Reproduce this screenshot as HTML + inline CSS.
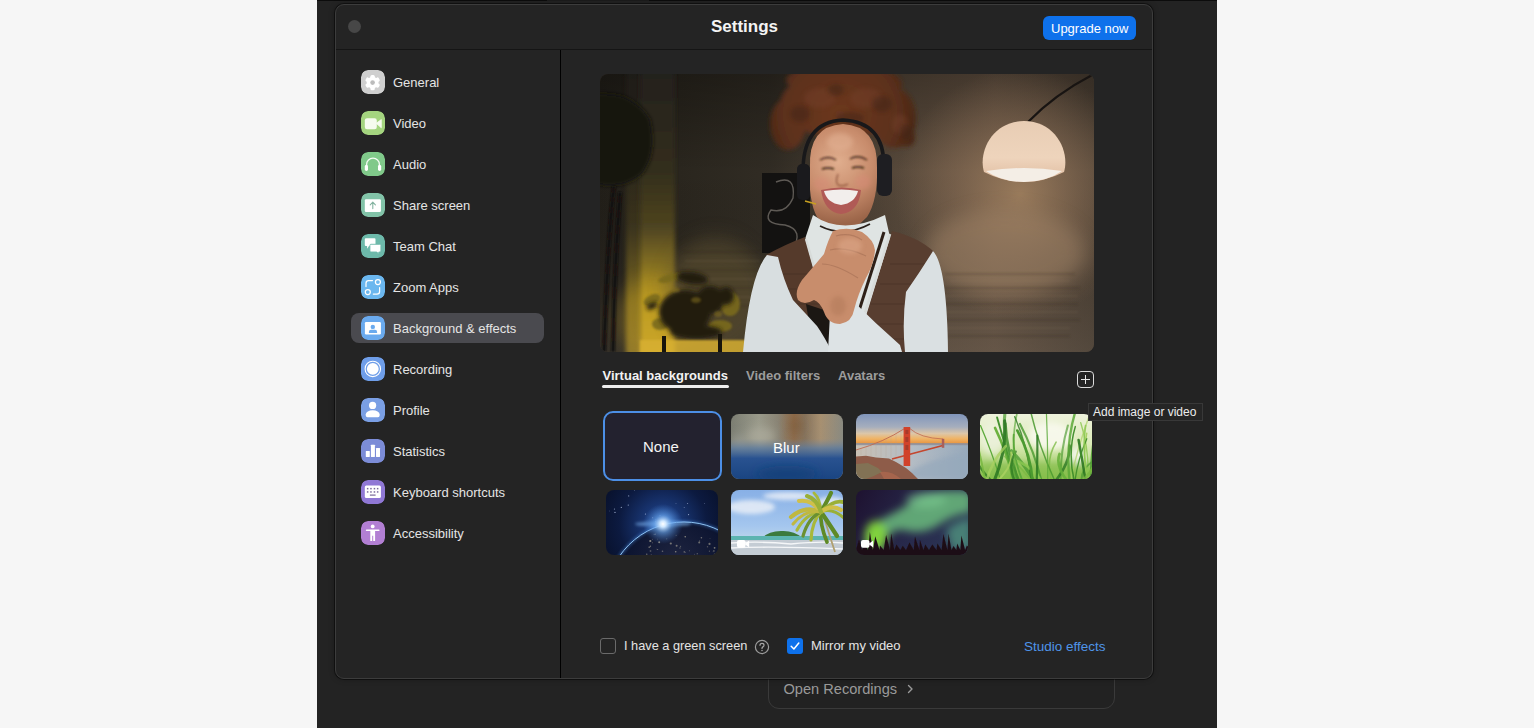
<!DOCTYPE html>
<html><head><meta charset="utf-8">
<style>
*{box-sizing:border-box;margin:0;padding:0}
html,body{width:1534px;height:728px;overflow:hidden;background:#f6f6f6;font-family:"Liberation Sans",sans-serif}
.abs{position:absolute}
.t{position:absolute;white-space:nowrap;line-height:1;font-family:"Liberation Sans",sans-serif}
#app{left:317px;top:0;width:900px;height:728px;background:#232323}
#topstrip{left:317px;top:0;width:900px;height:1px;background:#0c0c0c}
#dlg{left:335px;top:4px;width:818px;height:675px;background:#242424;border:1px solid #3c3c3c;border-radius:9px;box-shadow:0 0 0 1px rgba(0,0,0,.45),0 0 6px rgba(0,0,0,.3)}
.ico{position:absolute;left:361px;width:24px;height:24px;border-radius:7px}
.lbl{position:absolute;left:393px;font-size:13px;color:#e4e4e4}
.tile{position:absolute;width:112px;height:65px;border-radius:8px;overflow:hidden}
</style></head>
<body>
<div id="app" class="abs"></div>
<div id="topstrip" class="abs"></div><div class="abs" style="left:547px;top:0;width:102px;height:1px;background:#1c1c1c"></div>

<!-- Open recordings box behind dialog -->
<div class="abs" style="left:768px;top:640px;width:347px;height:69px;border:1px solid #3a3a3a;border-radius:11px;background:#222"></div>
<div class="t" style="left:783.5px;top:682px;font-size:14.6px;color:#9a9a9a">Open Recordings</div>
<svg class="abs" style="left:905px;top:683px" width="10" height="12" viewBox="0 0 10 12"><path d="M3.5 2.5 L7 6 L3.5 9.5" fill="none" stroke="#9a9a9a" stroke-width="1.4" stroke-linecap="round" stroke-linejoin="round"/></svg>

<div id="dlg" class="abs"></div>
<div class="abs" style="left:336px;top:49px;width:816px;height:1px;background:#151515"></div>
<div class="abs" style="left:560px;top:50px;width:1px;height:628px;background:#000"></div>
<div class="abs" style="left:348px;top:20px;width:13px;height:13px;border-radius:50%;background:#474747"></div>
<div class="t" style="left:711px;top:18.4px;font-size:17px;font-weight:700;color:#f4f4f4">Settings</div>
<div class="abs" style="left:1043px;top:16px;width:93px;height:24px;border-radius:6px;background:#0e71eb"></div>
<div class="t" style="left:1051px;top:21.6px;font-size:13px;color:#ffffff">Upgrade now</div>

<!-- sidebar -->
<div class="abs" style="left:351px;top:313px;width:193px;height:30px;border-radius:8px;background:#4a4a4f"></div>
<div id="icons"></div>
<svg class="ico" style="top:70px" width="24" height="24" viewBox="0 0 24 24"><rect width="24" height="24" rx="7" fill="#cfcfcf"/><g transform="translate(11.6 12.6)" fill="#fff"><circle r="5.9"/><rect x="-2.2" y="-7.6" width="4.4" height="4" rx="1.5" transform="rotate(0)"/><rect x="-2.2" y="-7.6" width="4.4" height="4" rx="1.5" transform="rotate(60)"/><rect x="-2.2" y="-7.6" width="4.4" height="4" rx="1.5" transform="rotate(120)"/><rect x="-2.2" y="-7.6" width="4.4" height="4" rx="1.5" transform="rotate(180)"/><rect x="-2.2" y="-7.6" width="4.4" height="4" rx="1.5" transform="rotate(240)"/><rect x="-2.2" y="-7.6" width="4.4" height="4" rx="1.5" transform="rotate(300)"/><circle r="2.3" fill="#bcbcbc"/></g></svg>
<svg class="ico" style="top:111px" width="24" height="24" viewBox="0 0 24 24"><rect width="24" height="24" rx="7" fill="#a4d47f"/><rect x="3.8" y="7.2" width="12" height="11" rx="2.2" fill="#f6fbef"/><path d="M15.2 12.3 L20.3 8.6 L20.3 16.8 Z" fill="#f6fbef" stroke="#f6fbef" stroke-width="0.8" stroke-linejoin="round"/></svg>
<svg class="ico" style="top:152px" width="24" height="24" viewBox="0 0 24 24"><rect width="24" height="24" rx="7" fill="#80c98a"/><path d="M5.6 15 L5.6 12.5 A6.4 6.4 0 0 1 18.4 12.5 L18.4 15" fill="none" stroke="#f3fbf3" stroke-width="1.3"/><rect x="3.8" y="12.8" width="3.2" height="6.1" rx="1.6" fill="#fff"/><rect x="17" y="12.8" width="3.2" height="6.1" rx="1.6" fill="#fff"/></svg>
<svg class="ico" style="top:193px" width="24" height="24" viewBox="0 0 24 24"><rect width="24" height="24" rx="7" fill="#82c3a8"/><rect x="3.8" y="6.3" width="16.1" height="12.6" rx="1.2" fill="#fff"/><path d="M11.8 15.6 L11.8 9.3 M9.2 11.8 L11.8 9.2 L14.4 11.8" fill="none" stroke="#82b3a0" stroke-width="1.1" stroke-linecap="round" stroke-linejoin="round"/></svg>
<svg class="ico" style="top:234px" width="24" height="24" viewBox="0 0 24 24"><rect width="24" height="24" rx="7" fill="#6db9aa"/><path d="M4.8 4.2 H13.5 A1 1 0 0 1 14.5 5.2 V11.1 A1 1 0 0 1 13.5 12.1 H8 L6.1 14.7 V12.1 H4.8 A1 1 0 0 1 3.8 11.1 V5.2 A1 1 0 0 1 4.8 4.2 Z" fill="#fff"/><path d="M9.9 10.3 H18.9 A1 1 0 0 1 19.9 11.3 V17 A1 1 0 0 1 18.9 18 H17.8 V20.3 L15.8 18 H9.9 A1 1 0 0 1 8.9 17 V11.3 A1 1 0 0 1 9.9 10.3 Z" fill="#fff" stroke="#6db9aa" stroke-width="0.9"/></svg>
<svg class="ico" style="top:275px" width="24" height="24" viewBox="0 0 24 24"><rect width="24" height="24" rx="7" fill="#6bb7ef"/><g fill="none" stroke="#fff" stroke-width="1.25" stroke-linecap="round"><circle cx="16.9" cy="7" r="2.5"/><circle cx="6.8" cy="17" r="2.5"/><path d="M5 11.6 V8.2 A2.6 2.6 0 0 1 7.6 5.6 H11.5"/><path d="M18.6 12.6 V16.4 A2.6 2.6 0 0 1 16 19 H12.3"/></g></svg>
<svg class="ico" style="top:316px" width="24" height="24" viewBox="0 0 24 24"><rect width="24" height="24" rx="7" fill="#6aaaee"/><rect x="3.9" y="6.1" width="16" height="12.4" rx="1.2" fill="#fff"/><circle cx="11.8" cy="10.9" r="2.2" fill="#6aaaee"/><path d="M7.9 17 V16 A2.2 2.2 0 0 1 10.1 13.8 H13.9 A2.2 2.2 0 0 1 16.1 16 V17 Z" fill="#6aaaee"/></svg>
<svg class="ico" style="top:357px" width="24" height="24" viewBox="0 0 24 24"><rect width="24" height="24" rx="7" fill="#6f9ee9"/><circle cx="11.8" cy="11.9" r="7.7" fill="none" stroke="#fff" stroke-width="1.1"/><circle cx="11.8" cy="11.9" r="5.9" fill="#fff"/></svg>
<svg class="ico" style="top:398px" width="24" height="24" viewBox="0 0 24 24"><rect width="24" height="24" rx="7" fill="#7a9fe4"/><circle cx="11.6" cy="7.4" r="3.6" fill="#fff"/><path d="M4.8 16.3 A6.8 4 0 0 1 18.6 16.3 V17.6 A1.6 1.6 0 0 1 17 19.2 H6.4 A1.6 1.6 0 0 1 4.8 17.6 Z" fill="#fff"/></svg>
<svg class="ico" style="top:439px" width="24" height="24" viewBox="0 0 24 24"><rect width="24" height="24" rx="7" fill="#7c8cd7"/><rect x="4.8" y="11.9" width="4" height="6.1" rx="0.4" fill="#fff"/><rect x="9.9" y="5.8" width="4" height="12.2" rx="0.4" fill="#fff"/><rect x="15" y="9.1" width="4" height="8.9" rx="0.4" fill="#fff"/></svg>
<svg class="ico" style="top:480px" width="24" height="24" viewBox="0 0 24 24"><rect width="24" height="24" rx="7" fill="#9078d5"/><rect x="3.8" y="5.6" width="16.1" height="12.4" rx="1.5" fill="#fff"/><g fill="#7a6a9a"><rect x="5.9" y="7.9" width="1.5" height="1.5"/><rect x="9.2" y="7.9" width="1.5" height="1.5"/><rect x="12.7" y="7.9" width="1.5" height="1.5"/><rect x="15.9" y="7.9" width="1.5" height="1.5"/><rect x="5.9" y="11.2" width="1.5" height="1.5"/><rect x="9.2" y="11.2" width="1.5" height="1.5"/><rect x="12.7" y="11.2" width="1.5" height="1.5"/><rect x="15.9" y="11.2" width="1.5" height="1.5"/><rect x="8.9" y="14.5" width="5.7" height="1.2"/></g></svg>
<svg class="ico" style="top:521px" width="24" height="24" viewBox="0 0 24 24"><rect width="24" height="24" rx="7" fill="#b27fd3"/><circle cx="11.7" cy="5.4" r="1.9" fill="#fff"/><path d="M5.6 8.5 H17.8 A0.8 0.8 0 0 1 17.8 10.1 H14.1 V20 H12.2 V14.8 H11.2 V20 H9.3 V10.1 H5.6 A0.8 0.8 0 0 1 5.6 8.5 Z" fill="#fff"/></svg>
<div class="lbl t" style="top:75.5px">General</div>
<div class="lbl t" style="top:116.5px">Video</div>
<div class="lbl t" style="top:157.5px">Audio</div>
<div class="lbl t" style="top:198.5px">Share screen</div>
<div class="lbl t" style="top:239.5px">Team Chat</div>
<div class="lbl t" style="top:280.5px">Zoom Apps</div>
<div class="lbl t" style="top:321.5px">Background &amp; effects</div>
<div class="lbl t" style="top:362.5px">Recording</div>
<div class="lbl t" style="top:403.5px">Profile</div>
<div class="lbl t" style="top:444.5px">Statistics</div>
<div class="lbl t" style="top:485.5px">Keyboard shortcuts</div>
<div class="lbl t" style="top:526.5px">Accessibility</div>

<!-- photo -->
<div class="abs" style="left:600px;top:74px;width:494px;height:278px;border-radius:8px;overflow:hidden;background:#3a3129"><svg width="494" height="278" viewBox="0 0 494 278">
<defs>
<linearGradient id="wallh" x1="0" y1="0" x2="494" y2="0" gradientUnits="userSpaceOnUse">
<stop offset="0" stop-color="#221f19"/><stop offset="0.16" stop-color="#2a261e"/><stop offset="0.35" stop-color="#312c24"/><stop offset="0.6" stop-color="#56483a"/><stop offset="0.8" stop-color="#645242"/><stop offset="1" stop-color="#4c4034"/>
</linearGradient>
<linearGradient id="wallv" x1="0" y1="0" x2="0" y2="278" gradientUnits="userSpaceOnUse">
<stop offset="0" stop-color="#000" stop-opacity="0.3"/><stop offset="0.35" stop-color="#000" stop-opacity="0"/><stop offset="1" stop-color="#6a6258" stop-opacity="0.25"/>
</linearGradient>
<radialGradient id="lampglow" cx="420" cy="120" r="125" gradientUnits="userSpaceOnUse">
<stop offset="0" stop-color="#a0805f" stop-opacity="0.9"/><stop offset="0.55" stop-color="#8f7258" stop-opacity="0.45"/><stop offset="1" stop-color="#8f7258" stop-opacity="0"/>
</radialGradient>
<linearGradient id="yband" x1="0" y1="0" x2="0" y2="278" gradientUnits="userSpaceOnUse">
<stop offset="0" stop-color="#24211a"/><stop offset="0.35" stop-color="#332e1c"/><stop offset="0.55" stop-color="#4e4420"/><stop offset="0.7" stop-color="#8a7420"/><stop offset="0.82" stop-color="#c0a024"/><stop offset="1" stop-color="#d6b030"/>
</linearGradient>
<linearGradient id="lampg" x1="0" y1="47" x2="0" y2="108" gradientUnits="userSpaceOnUse">
<stop offset="0" stop-color="#e8cdb4"/><stop offset="0.6" stop-color="#eed4bc"/><stop offset="1" stop-color="#e0bca0"/>
</linearGradient>
<radialGradient id="face" cx="238" cy="88" r="62" gradientUnits="userSpaceOnUse">
<stop offset="0" stop-color="#e0ae8e"/><stop offset="0.55" stop-color="#c88c6c"/><stop offset="1" stop-color="#9a6448"/>
</radialGradient>
<radialGradient id="hairg" cx="240" cy="40" r="80" gradientUnits="userSpaceOnUse">
<stop offset="0" stop-color="#6c3820"/><stop offset="0.7" stop-color="#5c301b"/><stop offset="1" stop-color="#472616"/>
</radialGradient>
<filter id="b1" filterUnits="userSpaceOnUse" x="-50" y="-50" width="600" height="400"><feGaussianBlur stdDeviation="0.8"/></filter>
<filter id="b2" filterUnits="userSpaceOnUse" x="-50" y="-50" width="600" height="400"><feGaussianBlur stdDeviation="2.2"/></filter>
<filter id="b6" filterUnits="userSpaceOnUse" x="-50" y="-50" width="600" height="400"><feGaussianBlur stdDeviation="9"/></filter>
<filter id="hairtex" filterUnits="userSpaceOnUse" x="-50" y="-50" width="600" height="400"><feTurbulence type="fractalNoise" baseFrequency="0.35" numOctaves="2" seed="3" result="n"/><feColorMatrix in="n" type="matrix" values="0 0 0 0 0.2  0 0 0 0 0.1  0 0 0 0 0.05  0 0 0 -1.6 1.1" result="nm"/><feComposite in="nm" in2="SourceAlpha" operator="in"/></filter>
</defs>
<rect width="494" height="278" fill="url(#wallh)"/>
<rect width="494" height="278" fill="url(#wallv)"/>
<rect width="494" height="278" fill="url(#lampglow)"/>
<ellipse cx="405" cy="178" rx="80" ry="42" fill="#a08468" opacity="0.5" filter="url(#b6)"/>
<ellipse cx="115" cy="225" rx="55" ry="50" fill="#54482e" opacity="0.6" filter="url(#b6)"/>
<!-- yellow lit band left -->
<rect x="26" y="-10" width="16" height="300" fill="url(#yband)" opacity="0.55" filter="url(#b2)"/>
<rect x="40" y="-10" width="35" height="300" fill="url(#yband)" filter="url(#b2)"/>
<ellipse cx="55" cy="245" rx="40" ry="40" fill="#b89422" opacity="0.35" filter="url(#b6)"/>
<ellipse cx="115" cy="220" rx="50" ry="60" fill="#54492f" opacity="0.45" filter="url(#b6)"/>
<!-- brick texture -->
<g stroke="#2a221b" stroke-width="1.2" opacity="0.4" filter="url(#b1)">
<path d="M345 200 H475 M335 214 H480 M330 230 H478 M335 246 H480 M340 262 H470 M82 178 H160 M80 196 H158 M85 214 H160 M80 232 H155"/>
</g>
<g stroke="#a08a6c" stroke-width="1" opacity="0.22" filter="url(#b1)">
<path d="M350 207 H470 M340 222 H478 M335 238 H478 M340 254 H470 M85 187 H160 M80 205 H158 M85 223 H160"/>
</g>
<!-- left dark shade blob -->
<path d="M-5 20 Q32 16 50 45 Q58 80 42 100 Q24 116 -5 110 Z" fill="#161410" filter="url(#b2)"/>
<path d="M14 112 Q8 160 4 278 M20 118 Q14 200 13 278" stroke="#12100d" stroke-width="3.5" fill="none" filter="url(#b1)"/>
<!-- plant -->
<g fill="#7a6a1c" opacity="0.9" filter="url(#b1)">
<ellipse cx="52" cy="226" rx="9" ry="5" transform="rotate(-25 52 226)"/><ellipse cx="70" cy="204" rx="12" ry="4" transform="rotate(-15 70 204)"/><ellipse cx="130" cy="230" rx="10" ry="12"/><ellipse cx="120" cy="252" rx="12" ry="6"/><ellipse cx="60" cy="250" rx="8" ry="6"/>
</g>
<g fill="#211c0f" filter="url(#b2)">
<ellipse cx="85" cy="238" rx="26" ry="22"/>
<ellipse cx="110" cy="226" rx="14" ry="14"/>
<ellipse cx="92" cy="204" rx="16" ry="6" transform="rotate(8 92 204)"/>
<ellipse cx="126" cy="222" rx="8" ry="9"/>
<ellipse cx="52" cy="232" rx="6" ry="3" transform="rotate(-25 52 232)"/>
<ellipse cx="96" cy="258" rx="26" ry="7"/>
</g>
<g fill="#8a7420" opacity="0.5" filter="url(#b1)">
<ellipse cx="96" cy="226" rx="5" ry="3"/><ellipse cx="118" cy="240" rx="4" ry="3"/><ellipse cx="76" cy="216" rx="4" ry="2.5"/>
</g>
<rect x="40" y="266" width="106" height="14" fill="#d8b030" opacity="0.85" filter="url(#b1)"/>
<rect x="62" y="262" width="4" height="16" fill="#17140b"/><rect x="118" y="260" width="4" height="18" fill="#17140b"/>
<!-- poster -->
<rect x="162" y="99" width="48" height="80" fill="#131211"/>
<path d="M176 108 Q196 100 193 124 Q186 140 171 136 Q161 150 185 151 Q205 156 192 176" stroke="#5e5a55" stroke-width="1.4" fill="none"/>
<!-- hair -->
<g fill="url(#hairg)" filter="url(#b2)">
<ellipse cx="242" cy="30" rx="62" ry="34"/>
<ellipse cx="188" cy="50" rx="18" ry="26"/>
<ellipse cx="294" cy="44" rx="22" ry="30"/>
<ellipse cx="228" cy="6" rx="42" ry="14"/>
<ellipse cx="272" cy="10" rx="30" ry="14"/>
<ellipse cx="306" cy="64" rx="9" ry="9"/>
</g>
<g fill="#74402a" opacity="0.45" filter="url(#b2)">
<ellipse cx="220" cy="24" rx="16" ry="10"/><ellipse cx="266" cy="24" rx="16" ry="10"/><ellipse cx="300" cy="50" rx="8" ry="10"/>
</g>
<g fill="#3e2214" opacity="0.45" filter="url(#b2)"><ellipse cx="200" cy="40" rx="10" ry="8"/><ellipse cx="250" cy="44" rx="14" ry="6"/><ellipse cx="282" cy="30" rx="10" ry="8"/><ellipse cx="236" cy="16" rx="8" ry="6"/><ellipse cx="306" cy="58" rx="6" ry="8"/></g>
<!-- headphone band -->
<path d="M203 100 Q202 48 243 46 Q284 48 284 92" stroke="#18181a" stroke-width="3.5" fill="none"/>
<!-- face -->
<path d="M210 94 Q208 52 243 50 Q278 52 277 94 Q278 126 267 143 Q254 157 242 157 Q228 156 217 143 Q208 126 210 94 Z" fill="url(#face)"/>
<ellipse cx="240" cy="68" rx="13" ry="9" fill="#e4b496" opacity="0.5" filter="url(#b2)"/>
<ellipse cx="222" cy="110" rx="8" ry="7" fill="#d88a78" opacity="0.45" filter="url(#b2)"/>
<ellipse cx="263" cy="108" rx="8" ry="7" fill="#d88a78" opacity="0.45" filter="url(#b2)"/>
<path d="M220 86 Q228 81 236 86 M250 85 Q258 80 267 86" stroke="#3e2416" stroke-width="1.4" fill="none" filter="url(#b1)"/>
<path d="M222 95 Q228 93 234 95 M252 94 Q258 92 264 94" stroke="#2e1a10" stroke-width="1.7" fill="none" filter="url(#b1)"/>
<path d="M238 100 Q235 108 238 111 Q243 113 248 110" stroke="#8a5038" stroke-width="1.2" fill="none" filter="url(#b1)"/>
<!-- mouth -->
<path d="M221 116 Q242 111 261 116 Q259 138 241 140 Q224 138 221 116 Z" fill="#b05a56"/>
<path d="M224 117 Q242 114 258 117 Q255 129 241 131 Q227 129 224 117 Z" fill="#f2eeec"/>
<!-- earcups -->
<rect x="197" y="90" width="13" height="36" rx="5" fill="#1a1a1d"/>
<rect x="277" y="80" width="15" height="42" rx="6" fill="#1e1e22"/>
<path d="M205 127 L216 130" stroke="#c8a020" stroke-width="1.5"/>
<!-- turtleneck -->
<path d="M213 141 Q242 162 285 141 L292 172 L268 242 L224 242 L204 168 Z" fill="#dfe4e3"/>
<path d="M220 152 Q244 164 270 150" stroke="#2a201a" stroke-width="1.8" fill="none"/>
<!-- vest left -->
<path d="M166 181 Q186 170 205 163 L226 240 L234 278 L172 278 Q164 222 166 181 Z" fill="#553a2b"/>
<path d="M206 165 L228 242" stroke="#d8dcda" stroke-width="2.4" fill="none"/>
<!-- vest right -->
<path d="M292 157 Q320 164 334 178 Q333 230 325 278 L260 278 Q262 250 266 242 Z" fill="#583e30"/>
<path d="M290 160 L264 242" stroke="#d8dcda" stroke-width="2.6" fill="none"/>
<path d="M284 158 L258 240" stroke="#2e2018" stroke-width="3" fill="none"/>
<g stroke="#3a281e" stroke-width="0.8" opacity="0.5"><path d="M175 200 H215 M172 215 H220 M172 230 H224 M172 245 H226 M290 190 H330 M280 210 H330 M270 230 H328 M264 250 H326 M262 265 H326"/></g>
<!-- dark center -->
<path d="M206 230 L236 240 L232 278 L214 278 Z" fill="#1b1713"/>
<!-- left sleeve -->
<path d="M167 181 Q150 200 143 278 L232 278 Q224 262 217 252 Q206 240 193 226 Q183 205 178 183 Z" fill="#d8dee0"/>
<!-- right sleeve -->
<path d="M333 177 Q347 192 348 278 L305 278 Q302 248 306 218 Q320 198 333 177 Z" fill="#dae0e2"/>
<path d="M228 278 L230 240 Q240 230 252 226 Q276 250 300 271 L302 278 Z" fill="#dde3e5"/>
<!-- hands -->
<path d="M233 157 Q248 152 262 158 Q274 166 275 176 Q274 190 266 204 Q258 220 254 236 Q252 248 240 250 Q228 250 224 238 Q220 228 214 226 Q204 232 198 226 Q194 218 202 206 Q214 192 224 180 Q228 166 233 157 Z" fill="#c88d6c"/>
<path d="M236 162 Q250 158 262 166 M230 176 Q246 172 266 182 M222 190 Q236 190 258 204" stroke="#a06c52" stroke-width="1.1" fill="none" opacity="0.55"/>
<ellipse cx="250" cy="172" rx="12" ry="8" fill="#e0aa8c" opacity="0.5" filter="url(#b2)"/>
<ellipse cx="238" cy="232" rx="8" ry="10" fill="#b07858" opacity="0.5" filter="url(#b2)"/>
<!-- lamp arm -->
<path d="M428 48 Q455 20 494 0" stroke="#181412" stroke-width="2.2" fill="none"/>
<!-- lamp -->
<path d="M384 98 C378 78 392 47 424 47 C456 47 470 78 464 98 Q444 108 424 108 Q404 108 384 98 Z" fill="url(#lampg)"/>
<path d="M386 97 Q424 91 462 97 Q446 108 424 108 Q402 108 386 97 Z" fill="#f4eee6"/>
</svg></div>

<!-- tabs -->
<div class="t" style="left:602.5px;top:369px;font-size:13px;font-weight:700;color:#f2f2f2">Virtual backgrounds</div>
<div class="abs" style="left:602px;top:385px;width:127px;height:2.5px;border-radius:2px;background:#ededed"></div>
<div class="t" style="left:746px;top:369px;font-size:13px;font-weight:700;color:#9c9c9c">Video filters</div>
<div class="t" style="left:838px;top:369px;font-size:13px;font-weight:700;color:#9c9c9c">Avatars</div>
<div class="abs" style="left:1077px;top:371px;width:17px;height:17px;border:1.5px solid #dcdcdc;border-radius:4px"></div>
<div class="abs" style="left:1081px;top:378.8px;width:9px;height:1.4px;background:#e8e8e8"></div>
<div class="abs" style="left:1084.8px;top:375px;width:1.4px;height:9px;background:#e8e8e8"></div>

<!-- tiles -->
<div class="abs" style="left:603px;top:411px;width:119px;height:70px;border:2px solid #4c8fe6;border-radius:10px;background:#23222f"></div>
<div class="t" style="left:643px;top:439.3px;font-size:15px;color:#f4f4f4">None</div>
<div class="tile" style="left:731px;top:414px"><svg width="112" height="65" viewBox="0 0 112 65"><defs>
<linearGradient id="bl1" x1="0" y1="0" x2="112" y2="0" gradientUnits="userSpaceOnUse"><stop offset="0" stop-color="#7c7e72"/><stop offset="0.25" stop-color="#9a9a8a"/><stop offset="0.42" stop-color="#8a8474"/><stop offset="0.56" stop-color="#8e6a48"/><stop offset="0.66" stop-color="#86735c"/><stop offset="0.8" stop-color="#a89070"/><stop offset="1" stop-color="#8a8a80"/></linearGradient>
<linearGradient id="bl2" x1="0" y1="0" x2="0" y2="65" gradientUnits="userSpaceOnUse"><stop offset="0" stop-color="#7a8898" stop-opacity="0"/><stop offset="0.38" stop-color="#7a8898" stop-opacity="0.05"/><stop offset="0.52" stop-color="#5a7aa0" stop-opacity="0.75"/><stop offset="0.68" stop-color="#295290" stop-opacity="1"/><stop offset="1" stop-color="#1a4582" stop-opacity="1"/></linearGradient>
<filter id="blb" filterUnits="userSpaceOnUse" x="-20" y="-20" width="160" height="110"><feGaussianBlur stdDeviation="4"/></filter>
</defs><rect width="112" height="65" fill="url(#bl1)"/>
<g filter="url(#blb)"><ellipse cx="30" cy="22" rx="14" ry="9" fill="#b0ae9e" opacity="0.7"/><ellipse cx="65" cy="12" rx="8" ry="9" fill="#7a5a3a" opacity="0.5"/><ellipse cx="8" cy="30" rx="8" ry="10" fill="#a0a298" opacity="0.6"/></g>
<rect width="112" height="65" fill="url(#bl2)"/>
<g filter="url(#blb)"><ellipse cx="56" cy="60" rx="30" ry="8" fill="#163e76" opacity="0.7"/></g>
</svg></div><div class="t" style="left:773px;top:439.5px;font-size:15px;color:#ffffff">Blur</div>
<div class="tile" style="left:856px;top:414px"><svg width="112" height="65" viewBox="0 0 112 65"><defs>
<linearGradient id="gg1" x1="0" y1="0" x2="0" y2="65" gradientUnits="userSpaceOnUse"><stop offset="0" stop-color="#8095bb"/><stop offset="0.2" stop-color="#a6aebd"/><stop offset="0.3" stop-color="#dcc6a8"/><stop offset="0.38" stop-color="#efb466"/><stop offset="0.44" stop-color="#e99b48"/><stop offset="0.47" stop-color="#a8a0a4"/><stop offset="0.6" stop-color="#b8bec4"/><stop offset="1" stop-color="#a4b4c4"/></linearGradient>
<linearGradient id="gg2" x1="0" y1="0" x2="112" y2="0" gradientUnits="userSpaceOnUse"><stop offset="0" stop-color="#c8c0b4"/><stop offset="0.5" stop-color="#b4bcc4"/><stop offset="1" stop-color="#98aabc"/></linearGradient>
<filter id="ggb" filterUnits="userSpaceOnUse" x="-10" y="-10" width="140" height="90"><feGaussianBlur stdDeviation="0.5"/></filter>
<filter id="ggb2" filterUnits="userSpaceOnUse" x="-10" y="-10" width="140" height="90"><feGaussianBlur stdDeviation="2"/></filter>
</defs><rect width="112" height="65" fill="url(#gg1)"/>
<rect x="0" y="30.5" width="112" height="35" fill="url(#gg2)"/>
<path d="M40 65 Q70 45 112 38 L112 65 Z" fill="#95a8bb" opacity="0.7" filter="url(#ggb2)"/>
<rect x="0" y="29" width="112" height="2.2" fill="#8a8c98" opacity="0.7" filter="url(#ggb)"/>
<g filter="url(#ggb)">
<path d="M0 36 Q28 28 48.6 14.5" stroke="#c06a50" stroke-width="0.9" fill="none"/>
<path d="M53.8 14.5 Q64 24 87 25" stroke="#c06a50" stroke-width="0.8" fill="none"/>
<g stroke="#b89a90" stroke-width="0.35" opacity="0.7"><path d="M5 35 V41 M10 33 V41 M15 31 V42 M20 29 V42 M25 27 V43 M30 25 V43 M35 22 V44 M40 20 V44 M45 17 V44"/></g>
<path d="M36 45 L86.8 31.5" stroke="#c4462e" stroke-width="1.8" fill="none"/>
<rect x="47.6" y="13" width="6.6" height="39" fill="#d1432b"/>
<rect x="49.4" y="16" width="3" height="4" fill="#a83a2a"/><rect x="49.4" y="23" width="3" height="5" fill="#a83a2a"/><rect x="49.4" y="31" width="3" height="5" fill="#a83a2a"/>
<rect x="85.8" y="24.8" width="2.5" height="9" fill="#a8605a"/>
<path d="M0 42.4 L10 41.8 L20 43.4 L33 44.4 L40 48 L50 54 L56 59 L62 65 L0 65 Z" fill="#8e5c48"/>
<path d="M0 50 L12 49 L22 54 L26 58 L18 62 L10 65 L0 65 Z" fill="#7e7a58" opacity="0.75"/>
<path d="M24 58 Q35 56 45 65 L28 65 Z" fill="#b06a50" opacity="0.7"/>
</g></svg></div>
<div class="tile" style="left:980px;top:414px"><svg width="112" height="65" viewBox="0 0 112 65"><defs>
<linearGradient id="gr0" x1="0" y1="0" x2="0" y2="65" gradientUnits="userSpaceOnUse"><stop offset="0" stop-color="#eef2dc"/><stop offset="0.45" stop-color="#dcebb8"/><stop offset="1" stop-color="#92c454"/></linearGradient>
<filter id="grb" filterUnits="userSpaceOnUse" x="-10" y="-10" width="140" height="90"><feGaussianBlur stdDeviation="0.55"/></filter>
<filter id="grb2" filterUnits="userSpaceOnUse" x="-10" y="-10" width="140" height="90"><feGaussianBlur stdDeviation="3"/></filter>
</defs><rect width="112" height="65" fill="url(#gr0)"/>
<g filter="url(#grb2)"><ellipse cx="70" cy="22" rx="22" ry="14" fill="#f8f8ee" opacity="0.9"/><ellipse cx="98" cy="42" rx="9" ry="10" fill="#f4f6f0" opacity="0.9"/><ellipse cx="12" cy="25" rx="12" ry="16" fill="#f0f2e4" opacity="0.7"/><rect x="0" y="48" width="112" height="20" fill="#7ab840" opacity="0.55"/></g>
<g filter="url(#grb)" fill="none" stroke-linecap="round"><path d="M34.5 68 Q26.5 34.2 17.1 3.5" stroke="#3e8e2a" stroke-width="1.9" opacity="0.97"/><path d="M21.2 68 Q11.9 38.3 0.5 11.6" stroke="#5aa838" stroke-width="1.3" opacity="0.98"/><path d="M71.9 68 Q65.0 46.6 76.1 28.1" stroke="#78b840" stroke-width="1.6" opacity="0.75"/><path d="M12.6 68 Q-3.3 52.1 -6.5 39.2" stroke="#2f7a24" stroke-width="2.4" opacity="0.78"/><path d="M61.8 68 Q54.5 37.4 40.0 9.9" stroke="#4a9a30" stroke-width="2.1" opacity="0.81"/><path d="M107.7 68 Q109.8 36.8 100.7 8.6" stroke="#8cc850" stroke-width="1.4" opacity="0.83"/><path d="M101.8 68 Q99.9 56.0 113.2 47.0" stroke="#4a9a30" stroke-width="2.0" opacity="0.70"/><path d="M54.7 68 Q44.6 50.8 31.6 36.7" stroke="#4a9a30" stroke-width="3.0" opacity="0.77"/><path d="M37.7 68 Q29.5 30.7 37.6 -3.6" stroke="#5aa838" stroke-width="1.7" opacity="0.67"/><path d="M80.6 68 Q80.0 38.2 87.9 11.4" stroke="#4a9a30" stroke-width="2.0" opacity="0.66"/><path d="M51.3 68 Q48.4 33.9 34.7 2.8" stroke="#2f7a24" stroke-width="1.5" opacity="0.79"/><path d="M106.9 68 Q102.3 42.1 106.7 19.3" stroke="#a8d060" stroke-width="1.5" opacity="0.95"/><path d="M29.0 68 Q36.0 53.7 24.7 42.4" stroke="#78b840" stroke-width="1.5" opacity="0.70"/><path d="M75.3 68 Q58.8 31.8 50.9 -1.4" stroke="#4a9a30" stroke-width="1.5" opacity="0.86"/><path d="M33.9 68 Q27.6 39.5 15.1 14.0" stroke="#67b03a" stroke-width="2.7" opacity="0.96"/><path d="M90.2 68 Q97.5 33.9 108.9 2.8" stroke="#a8d060" stroke-width="1.4" opacity="0.67"/><path d="M3.2 68 Q-13.0 40.7 -11.3 16.3" stroke="#78b840" stroke-width="1.2" opacity="0.84"/><path d="M110.8 68 Q111.1 37.5 116.5 10.0" stroke="#4a9a30" stroke-width="2.5" opacity="0.86"/><path d="M52.8 68 Q42.8 56.0 33.6 46.9" stroke="#78b840" stroke-width="1.8" opacity="0.69"/><path d="M36.8 68 Q21.4 31.6 25.0 -1.8" stroke="#4a9a30" stroke-width="3.1" opacity="0.70"/><path d="M61.3 68 Q56.7 56.0 37.6 47.0" stroke="#8cc850" stroke-width="2.6" opacity="0.83"/><path d="M105.8 68 Q102.3 45.5 98.6 26.0" stroke="#2f7a24" stroke-width="2.5" opacity="0.93"/><path d="M94.8 68 Q97.9 44.9 106.8 24.8" stroke="#3e8e2a" stroke-width="1.3" opacity="0.93"/><path d="M52.6 68 Q51.1 40.8 37.3 16.5" stroke="#4a9a30" stroke-width="2.6" opacity="0.98"/><path d="M39.5 68 Q26.6 37.2 25.5 9.4" stroke="#3e8e2a" stroke-width="2.4" opacity="0.82"/><path d="M74.7 68 Q90.3 48.4 89.6 31.7" stroke="#2f7a24" stroke-width="2.8" opacity="0.82"/><path d="M16.8 68 Q33.4 51.7 31.2 38.4" stroke="#a8d060" stroke-width="2.0" opacity="0.91"/><path d="M5.4 68 Q-1.4 30.3 -11.7 -4.4" stroke="#78b840" stroke-width="2.1" opacity="0.86"/><path d="M67.7 68 Q68.0 31.6 66.4 -1.9" stroke="#5aa838" stroke-width="1.2" opacity="0.83"/><path d="M108.9 68 Q101.5 38.3 105.6 11.5" stroke="#8cc850" stroke-width="1.7" opacity="0.83"/><path d="M88.2 68 Q75.0 52.5 79.5 40.0" stroke="#67b03a" stroke-width="2.7" opacity="0.88"/><path d="M94.4 68 Q87.5 38.8 95.3 12.6" stroke="#3e8e2a" stroke-width="1.5" opacity="0.96"/><path d="M89.7 68 Q85.3 31.5 95.2 -2.0" stroke="#5aa838" stroke-width="2.4" opacity="0.84"/><path d="M34.8 68 Q27.4 51.3 35.7 37.6" stroke="#2f7a24" stroke-width="2.3" opacity="0.72"/><path d="M0.1 68 Q-2.0 33.2 -20.0 1.3" stroke="#4a9a30" stroke-width="1.3" opacity="0.86"/><path d="M56.7 68 Q57.6 43.4 57.3 21.7" stroke="#2f7a24" stroke-width="2.2" opacity="0.89"/><path d="M101.9 68 Q121.9 45.9 124.0 26.9" stroke="#78b840" stroke-width="2.9" opacity="0.80"/><path d="M42.9 68 Q32.5 42.8 33.7 20.6" stroke="#5aa838" stroke-width="1.8" opacity="0.96"/><path d="M13.8 68 Q26.9 35.9 24.6 6.9" stroke="#2f7a24" stroke-width="3.1" opacity="0.91"/><path d="M6.5 68 Q10.6 48.5 25.7 32.1" stroke="#a8d060" stroke-width="2.6" opacity="0.77"/></g></svg></div>
<div class="tile" style="left:606px;top:490px"><svg width="112" height="65" viewBox="0 0 112 65"><defs>
<radialGradient id="ea1" cx="57" cy="34" r="80" gradientUnits="userSpaceOnUse"><stop offset="0" stop-color="#3060b0"/><stop offset="0.25" stop-color="#183470"/><stop offset="0.55" stop-color="#0c1a40"/><stop offset="1" stop-color="#060b1e"/></radialGradient>
<radialGradient id="ea2" cx="57" cy="34" r="20" gradientUnits="userSpaceOnUse"><stop offset="0" stop-color="#ffffff"/><stop offset="0.15" stop-color="#d0e8ff"/><stop offset="0.45" stop-color="#6aa8f0" stop-opacity="0.6"/><stop offset="1" stop-color="#3a70c0" stop-opacity="0"/></radialGradient>
<radialGradient id="ea3" cx="70" cy="70" r="50" gradientUnits="userSpaceOnUse"><stop offset="0" stop-color="#1e2440"/><stop offset="1" stop-color="#0c1430"/></radialGradient>
<filter id="eab" filterUnits="userSpaceOnUse" x="-10" y="-10" width="140" height="90"><feGaussianBlur stdDeviation="0.6"/></filter>
<filter id="eab2" filterUnits="userSpaceOnUse" x="-10" y="-10" width="140" height="90"><feGaussianBlur stdDeviation="1.5"/></filter>
</defs><rect width="112" height="65" fill="url(#ea1)"/><circle cx="54.0" cy="25.6" r="0.36" fill="#c0d0f0" opacity="0.90"/><circle cx="8.4" cy="19.1" r="0.51" fill="#c0d0f0" opacity="0.84"/><circle cx="82.6" cy="24.6" r="0.53" fill="#c0d0f0" opacity="0.85"/><circle cx="39.4" cy="24.0" r="0.57" fill="#c0d0f0" opacity="0.82"/><circle cx="46.7" cy="27.7" r="0.55" fill="#c0d0f0" opacity="0.64"/><circle cx="70.0" cy="13.4" r="0.45" fill="#c0d0f0" opacity="0.67"/><circle cx="9.0" cy="22.4" r="0.60" fill="#c0d0f0" opacity="0.83"/><circle cx="81.6" cy="13.6" r="0.51" fill="#c0d0f0" opacity="0.65"/><circle cx="49.3" cy="29.3" r="0.28" fill="#c0d0f0" opacity="0.75"/><circle cx="3.3" cy="21.0" r="0.42" fill="#c0d0f0" opacity="0.44"/><circle cx="78.2" cy="17.4" r="0.47" fill="#c0d0f0" opacity="0.85"/><circle cx="28.7" cy="0.4" r="0.36" fill="#c0d0f0" opacity="0.71"/><circle cx="22.7" cy="5.9" r="0.57" fill="#c0d0f0" opacity="0.70"/><circle cx="49.5" cy="31.2" r="0.36" fill="#c0d0f0" opacity="0.70"/><circle cx="22.2" cy="15.1" r="0.53" fill="#c0d0f0" opacity="0.85"/><circle cx="98.6" cy="13.5" r="0.45" fill="#c0d0f0" opacity="0.49"/><circle cx="15.3" cy="17.4" r="0.54" fill="#c0d0f0" opacity="0.81"/><circle cx="79.7" cy="33.3" r="0.35" fill="#c0d0f0" opacity="0.40"/>
<circle cx="78" cy="110" r="78" fill="url(#ea3)"/>
<circle cx="78" cy="110" r="78" fill="none" stroke="#4a90e8" stroke-width="2.4" opacity="0.5" filter="url(#eab2)"/>
<circle cx="78" cy="110" r="78" fill="none" stroke="#9ad0ff" stroke-width="0.9" filter="url(#eab)"/>
<g filter="url(#eab)"><circle cx="70.6" cy="55.8" r="1.0" fill="#c8c0a8" opacity="0.53"/><circle cx="74.6" cy="56.3" r="0.5" fill="#c8c0a8" opacity="0.56"/><circle cx="83.4" cy="60.7" r="0.5" fill="#c8c0a8" opacity="0.45"/><circle cx="44.5" cy="61.0" r="0.9" fill="#c8c0a8" opacity="0.32"/><circle cx="108.7" cy="64.3" r="0.9" fill="#c8c0a8" opacity="0.61"/><circle cx="49.3" cy="44.3" r="0.8" fill="#c8c0a8" opacity="0.33"/><circle cx="51.7" cy="49.1" r="0.4" fill="#c8c0a8" opacity="0.53"/><circle cx="69.7" cy="61.7" r="0.8" fill="#c8c0a8" opacity="0.62"/><circle cx="74.0" cy="57.9" r="0.7" fill="#c8c0a8" opacity="0.44"/><circle cx="109.8" cy="64.9" r="1.0" fill="#c8c0a8" opacity="0.65"/><circle cx="60.7" cy="48.8" r="0.6" fill="#c8c0a8" opacity="0.34"/><circle cx="93.2" cy="52.4" r="1.0" fill="#c8c0a8" opacity="0.49"/><circle cx="107.0" cy="61.8" r="0.4" fill="#c8c0a8" opacity="0.40"/><circle cx="103.5" cy="53.9" r="1.1" fill="#c8c0a8" opacity="0.50"/><circle cx="43.3" cy="57.2" r="0.9" fill="#c8c0a8" opacity="0.43"/><circle cx="44.3" cy="51.0" r="1.1" fill="#c8c0a8" opacity="0.68"/><circle cx="46.5" cy="49.2" r="0.5" fill="#c8c0a8" opacity="0.33"/><circle cx="95.4" cy="47.7" r="0.8" fill="#c8c0a8" opacity="0.52"/><circle cx="51.7" cy="59.4" r="0.5" fill="#c8c0a8" opacity="0.62"/><circle cx="46.4" cy="52.8" r="0.5" fill="#c8c0a8" opacity="0.43"/><circle cx="107.9" cy="60.9" r="0.6" fill="#c8c0a8" opacity="0.74"/><circle cx="53.2" cy="52.3" r="1.0" fill="#c8c0a8" opacity="0.62"/><circle cx="45.2" cy="64.8" r="0.5" fill="#c8c0a8" opacity="0.43"/><circle cx="93.6" cy="50.9" r="0.6" fill="#c8c0a8" opacity="0.34"/><circle cx="44.5" cy="56.2" r="0.6" fill="#c8c0a8" opacity="0.60"/><circle cx="64.8" cy="53.5" r="1.1" fill="#c8c0a8" opacity="0.54"/><circle cx="79.4" cy="62.2" r="0.5" fill="#c8c0a8" opacity="0.38"/><circle cx="103.4" cy="61.2" r="0.6" fill="#c8c0a8" opacity="0.39"/><circle cx="91.2" cy="63.7" r="0.5" fill="#c8c0a8" opacity="0.78"/><circle cx="101.5" cy="56.7" r="0.7" fill="#c8c0a8" opacity="0.35"/><circle cx="40.8" cy="64.2" r="0.6" fill="#c8c0a8" opacity="0.65"/><circle cx="56.5" cy="61.3" r="0.8" fill="#c8c0a8" opacity="0.45"/><circle cx="50.6" cy="59.1" r="0.4" fill="#c8c0a8" opacity="0.41"/><circle cx="78.3" cy="61.9" r="0.8" fill="#c8c0a8" opacity="0.44"/><circle cx="104.0" cy="48.3" r="0.4" fill="#c8c0a8" opacity="0.43"/><circle cx="70.1" cy="45.3" r="0.5" fill="#c8c0a8" opacity="0.48"/><circle cx="79.2" cy="46.8" r="0.7" fill="#c8c0a8" opacity="0.75"/><circle cx="108.6" cy="57.8" r="0.9" fill="#c8c0a8" opacity="0.59"/><circle cx="48.1" cy="44.7" r="0.4" fill="#c8c0a8" opacity="0.76"/><circle cx="88.5" cy="64.2" r="0.4" fill="#c8c0a8" opacity="0.62"/></g>
<ellipse cx="57" cy="34" rx="28" ry="3" fill="#8ac4ff" opacity="0.5" filter="url(#eab2)"/>
<rect width="112" height="65" fill="url(#ea2)"/>
</svg></div>
<div class="tile" style="left:731px;top:490px"><svg width="112" height="65" viewBox="0 0 112 65"><defs>
<linearGradient id="be1" x1="0" y1="0" x2="0" y2="65" gradientUnits="userSpaceOnUse"><stop offset="0" stop-color="#88b0e6"/><stop offset="0.55" stop-color="#a4c6ee"/><stop offset="0.72" stop-color="#b6d2ec"/></linearGradient>
<filter id="beb" filterUnits="userSpaceOnUse" x="-10" y="-10" width="140" height="90"><feGaussianBlur stdDeviation="2"/></filter>
<filter id="beb2" filterUnits="userSpaceOnUse" x="-10" y="-10" width="140" height="90"><feGaussianBlur stdDeviation="0.5"/></filter>
</defs><rect width="112" height="65" fill="url(#be1)"/>
<g filter="url(#beb)" fill="#eef2f8" opacity="0.8"><ellipse cx="20" cy="17" rx="24" ry="7"/><ellipse cx="58" cy="6" rx="26" ry="4"/><ellipse cx="100" cy="12" rx="14" ry="5"/></g>
<path d="M31 48 Q38 41 50 41 Q62 40 72 48 Z" fill="#3a7a3e" filter="url(#beb2)"/>
<rect x="0" y="46" width="112" height="5" fill="#5cb4b0" filter="url(#beb2)"/>
<rect x="0" y="50" width="112" height="15" fill="#c4ccd4"/>
<path d="M0 53 Q30 51 60 54 Q90 51 112 53 M0 58 Q40 56 112 59" stroke="#f4f6f8" stroke-width="1.3" fill="none" filter="url(#beb2)"/>
<path d="M104 62 Q98 44 92 24" stroke="#b0a070" stroke-width="1.8" fill="none"/>
<g filter="url(#beb2)"><path d="M90 22 Q75.3 23.0 66.0 40.0" stroke="#a8b83a" stroke-width="3.2" stroke-linecap="round" fill="none"/><path d="M90 22 Q74.2 15.0 60.0 27.0" stroke="#c0b840" stroke-width="4.2" stroke-linecap="round" fill="none"/><path d="M90 22 Q80.7 9.0 68.0 11.0" stroke="#d0c048" stroke-width="4.1" stroke-linecap="round" fill="none"/><path d="M90 22 Q89.3 8.8 83.0 3.0" stroke="#a8b83a" stroke-width="2.8" stroke-linecap="round" fill="none"/><path d="M90 22 Q97.8 8.0 100.0 3.0" stroke="#5e8a28" stroke-width="4.1" stroke-linecap="round" fill="none"/><path d="M90 22 Q102.5 9.5 112.0 12.0" stroke="#9ab038" stroke-width="3.9" stroke-linecap="round" fill="none"/><path d="M90 22 Q100.6 17.2 113.0 28.0" stroke="#9ab038" stroke-width="3.0" stroke-linecap="round" fill="none"/><path d="M90 22 Q94.4 28.0 106.0 46.0" stroke="#5e8a28" stroke-width="4.3" stroke-linecap="round" fill="none"/><path d="M90 22 Q88.5 33.5 96.0 52.0" stroke="#5e8a28" stroke-width="3.7" stroke-linecap="round" fill="none"/><path d="M90 22 Q80.8 31.5 80.0 50.0" stroke="#a8b83a" stroke-width="3.2" stroke-linecap="round" fill="none"/><path d="M90 22 Q77.4 27.5 72.0 46.0" stroke="#6a9030" stroke-width="3.2" stroke-linecap="round" fill="none"/><path d="M90 22 Q74.2 19.0 62.0 34.0" stroke="#c0b840" stroke-width="3.1" stroke-linecap="round" fill="none"/><path d="M90 22 Q100.3 14.0 110.0 20.0" stroke="#d0c048" stroke-width="4.1" stroke-linecap="round" fill="none"/><path d="M90 22 Q85.4 8.5 76.0 6.0" stroke="#9ab038" stroke-width="4.1" stroke-linecap="round" fill="none"/></g>
<rect x="6" y="50" width="8.5" height="7.8" rx="2" fill="#fff"/><path d="M13.5 54 L18.2 50.6 L18.2 57.4 Z" fill="#fff"/>
</svg></div>
<div class="tile" style="left:856px;top:490px"><svg width="112" height="65" viewBox="0 0 112 65"><defs>
<linearGradient id="au1" x1="0" y1="0" x2="112" y2="65" gradientUnits="userSpaceOnUse"><stop offset="0" stop-color="#1e1230"/><stop offset="0.5" stop-color="#27284a"/><stop offset="1" stop-color="#2c3858"/></linearGradient>
<filter id="aub" filterUnits="userSpaceOnUse" x="-20" y="-20" width="160" height="110"><feGaussianBlur stdDeviation="4.5"/></filter>
<filter id="aub2" filterUnits="userSpaceOnUse" x="-10" y="-10" width="140" height="90"><feGaussianBlur stdDeviation="0.5"/></filter>
</defs><rect width="112" height="65" fill="url(#au1)"/>
<g filter="url(#aub)">
<path d="M8 62 Q8 38 28 28 Q48 18 62 8 Q80 -2 116 2 L116 22 Q98 24 84 34 Q66 46 48 40 Q30 38 26 62 Z" fill="#66b47a" opacity="0.9"/>
<ellipse cx="20" cy="46" rx="11" ry="15" fill="#80d23c"/>
<path d="M90 40 Q100 30 116 28 L116 60 L95 60 Z" fill="#58a888" opacity="0.65"/>
<ellipse cx="70" cy="10" rx="20" ry="8" fill="#7ac890" opacity="0.6"/>
</g>
<path d="M0 65 L0 60 L3.0 49.6 L6.0 60 L8.3 53.8 L12.0 60 L13.9 42.1 L16.9 60 L19.3 46.3 L23.5 60 L24.0 55.4 L27.7 60 L30.1 44.9 L34.0 60 L35.2 43.6 L38.3 60 L40.5 54.4 L44.4 60 L46.7 55.8 L50.0 60 L53.5 52.4 L57.7 60 L59.0 46.5 L63.4 60 L63.9 49.8 L67.4 60 L69.3 54.6 L73.0 60 L76.3 54.6 L80.5 60 L81.4 53.5 L85.6 60 L87.4 44.0 L91.4 60 L92.5 43.8 L95.5 60 L97.6 55.9 L100.3 60 L101.2 53.6 L104.3 60 L105.4 45.4 L109.1 60 L110.9 55.5 L115.1 60 L112 65 Z" fill="#1f0c14" filter="url(#aub2)"/>
<rect x="5" y="50" width="8.5" height="7.8" rx="2" fill="#fff"/><path d="M12.5 54 L17.2 50.6 L17.2 57.4 Z" fill="#fff"/>
</svg></div>

<!-- tooltip -->
<div class="abs" style="left:1088px;top:403px;width:115px;height:18px;background:#252525;border:1px solid #383838"></div>
<div class="t" style="left:1093px;top:406px;font-size:12px;color:#ececec">Add image or video</div>

<!-- bottom controls -->
<div class="abs" style="left:600px;top:638px;width:16px;height:16px;border:1.5px solid #6a6a6a;border-radius:3px"></div>
<div class="t" style="left:624px;top:639.6px;font-size:12.75px;color:#e4e4e4">I have a green screen</div>
<svg class="abs" style="left:754px;top:639px" width="16" height="16" viewBox="0 0 16 16"><circle cx="8" cy="8" r="6.6" fill="none" stroke="#9c9c9c" stroke-width="1.2"/><path d="M6 6.3 Q6 4.4 8 4.4 Q10 4.4 10 6.2 Q10 7.3 8.9 7.9 Q8 8.4 8 9.4" fill="none" stroke="#a8a8a8" stroke-width="1.2" stroke-linecap="round"/><circle cx="8" cy="11.4" r="0.75" fill="#a8a8a8"/></svg>
<svg class="abs" style="left:787px;top:638px" width="16" height="16" viewBox="0 0 16 16"><rect width="16" height="16" rx="3" fill="#0e71eb"/><path d="M4.2 8.3 L6.9 11 L11.8 5" fill="none" stroke="#fff" stroke-width="1.5" stroke-linecap="round" stroke-linejoin="round"/></svg>
<div class="t" style="left:811px;top:639.4px;font-size:13px;color:#e4e4e4">Mirror my video</div>
<div class="t" style="left:1024px;top:640px;font-size:13.5px;color:#4f94e9">Studio effects</div>
</body></html>
